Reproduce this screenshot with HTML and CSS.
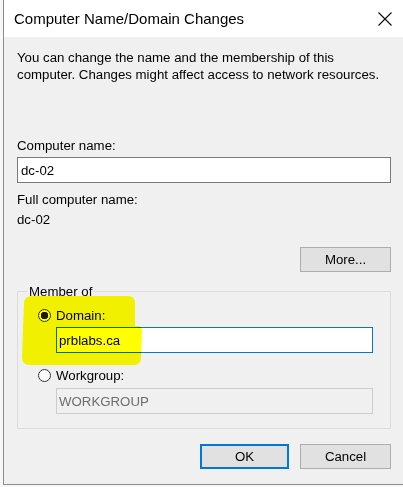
FILE: index.html
```html
<!DOCTYPE html>
<html>
<head>
<meta charset="utf-8">
<link rel="stylesheet" href="styles.css">
</head>
<body>
<div class="window">
  <div class="titlebar">
    <span class="title">Computer Name/Domain Changes</span>
    <svg class="close" width="14" height="14" viewBox="0 0 14 14"><path d="M0.5 0.5 L13.5 13.5 M13.5 0.5 L0.5 13.5" stroke="#111" stroke-width="1.2" fill="none"/></svg>
  </div>
  <div class="content">
    <p class="desc">You can change the name and the membership of this computer. Changes might affect access to network resources.</p>
    <label class="label first">Computer name:</label>
    <input class="field" type="text" value="dc-02">
    <div class="label full">Full computer name:</div>
    <div class="label value">dc-02</div>
    <div class="more-row"><button class="btn more">More...</button></div>
    <fieldset class="group">
      <legend>Member of</legend>
      <label class="radio-row first-radio"><input type="radio" name="m" checked><span>Domain:</span></label>
      <input class="field domain" type="text" value="prblabs.ca">
      <label class="radio-row second-radio"><input type="radio" name="m"><span>Workgroup:</span></label>
      <input class="field wg" type="text" value="WORKGROUP" disabled>
    </fieldset>
    <div class="actions">
      <button class="btn ok">OK</button>
      <button class="btn cancel">Cancel</button>
    </div>
  </div>
  <svg class="highlight" width="122" height="72" viewBox="0 0 122 72"><path d="M10 1 Q2 1 2 9 L1 33 L0 62 Q0 70 8 70 L112 70 Q119 70 119 62 L120 36 Q120 31 115 31 L113 31 L113 8 Q113 1 106 1 Z" fill="#ffff00"/></svg>
</div>
</body>
</html>
```
FILE: styles.css
```css
html, body {
  margin: 0;
  padding: 0;
}
body {
  background: #f7f7f7;
  width: 403px;
  height: 487px;
  overflow: hidden;
  font-family: "Liberation Sans", Arial, sans-serif;
  font-size: 13.25px;
  color: #000;
}
.window {
  position: relative;
  margin-left: 3px;
  height: 485px;
  box-sizing: border-box;
  border-left: 1px solid #8c8c8c;
  border-bottom: 1px solid #8c8c8c;
  background: #f0f0f0;
}
.titlebar {
  height: 37px;
  background: #fff;
  display: flex;
  align-items: center;
  justify-content: space-between;
  padding: 0 11px 0 10px;
}
.title {
  font-size: 15px;
  color: #000;
}
.close {
  display: block;
}
.content {
  padding: 0 12px 0 13px;
  display: flex;
  flex-direction: column;
  line-height: 17px;
}
.desc {
  margin: 12px 0 0 0;
  line-height: 17px;
}
.label {
  display: block;
  line-height: 17px;
}
.label.first {
  margin-top: 54px;
}
.field {
  display: block;
  box-sizing: border-box;
  height: 26px;
  margin: 3px 0 0 0;
  padding: 0 3px;
  border: 1px solid #7a7a7a;
  background: #fff;
  font-family: inherit;
  font-size: 13.25px;
  color: #000;
  outline: none;
}
.label.full {
  margin-top: 8px;
}
.label.value {
  margin-top: 3px;
}
.more-row {
  display: flex;
  justify-content: flex-end;
  margin-top: 19px;
}
.btn {
  box-sizing: border-box;
  height: 25px;
  width: 91px;
  background: #e1e1e1;
  border: 1px solid #adadad;
  font-family: inherit;
  font-size: 13.25px;
  color: #000;
  padding: 0;
  margin: 0;
}
.group {
  margin: 11px 0 0 0;
  padding: 0 17px 14px 20px;
  border: 1px solid #dcdcdc;
  display: flex;
  flex-direction: column;
}
.group legend {
  padding: 0 2px;
  margin-left: -11px;
  line-height: 17px;
}
.radio-row {
  display: flex;
  align-items: center;
  gap: 5px;
  line-height: 17px;
}
.radio-row input {
  appearance: none;
  -webkit-appearance: none;
  width: 13px;
  height: 13px;
  margin: 0;
  border: 1px solid #333;
  border-radius: 50%;
  background: #fff;
  box-sizing: border-box;
  position: relative;
}
.radio-row input:checked {
  background: radial-gradient(circle, #1a1a1a 0 3.5px, #fff 4px);
}
.first-radio {
  margin-top: 7px;
}
.second-radio {
  margin-top: 14px;
}
.field.domain, .field.wg {
  margin-left: 18px;
}
.field.domain {
  border-color: #0078d7;
  padding-left: 2px;
}
.field.wg {
  margin-top: 4px;
  background: #f0f0f0;
  border-color: #cccccc;
  color: #6d6d6d;
  padding-left: 2px;
}
.actions {
  display: flex;
  justify-content: flex-end;
  gap: 11px;
  margin-top: 15px;
}
.btn.ok {
  width: 89px;
  border: 2px solid #0078d7;
}
.highlight {
  position: absolute;
  left: 18px;
  top: 295px;
  mix-blend-mode: multiply;
  pointer-events: none;
}
```
